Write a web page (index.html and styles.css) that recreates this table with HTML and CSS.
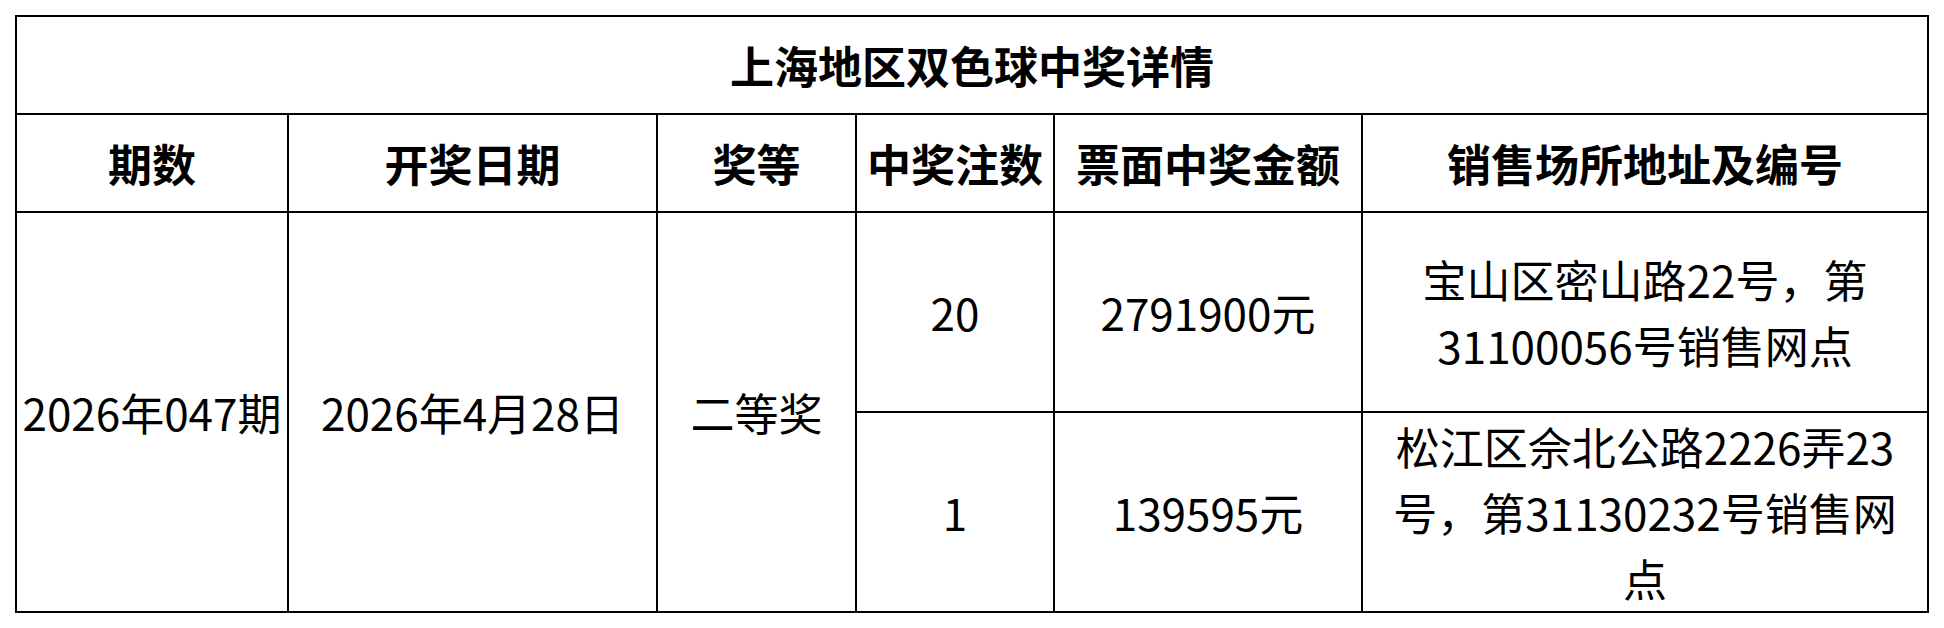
FILE: index.html
```html
<!DOCTYPE html>
<html lang="zh-CN">
<head>
<meta charset="utf-8">
<title>上海地区双色球中奖详情</title>
<link rel="stylesheet" href="styles.css">
</head>
<body>
<div class="page">
  <table class="prize-table">
    <colgroup>
      <col class="c1">
      <col class="c2">
      <col class="c3">
      <col class="c4">
      <col class="c5">
      <col class="c6">
    </colgroup>
    <tr class="row-title">
      <th colspan="6">上海地区双色球中奖详情</th>
    </tr>
    <tr class="row-head">
      <th>期数</th>
      <th>开奖日期</th>
      <th>奖等</th>
      <th>中奖注数</th>
      <th>票面中奖金额</th>
      <th>销售场所地址及编号</th>
    </tr>
    <tr class="row-data1">
      <td rowspan="2">2026年047期</td>
      <td rowspan="2">2026年4月28日</td>
      <td rowspan="2">二等奖</td>
      <td>20</td>
      <td>2791900元</td>
      <td class="addr">宝山区密山路22号，第31100056号销售网点</td>
    </tr>
    <tr class="row-data2">
      <td>1</td>
      <td>139595元</td>
      <td class="addr">松江区佘北公路2226弄23号，第31130232号销售网点</td>
    </tr>
  </table>
</div>
</body>
</html>
```
FILE: styles.css
```css
html, body {
  margin: 0;
  padding: 0;
  background: #fff;
}

.page {
  padding: 15px 0 0 15px;
}

.prize-table {
  border-collapse: collapse;
  table-layout: fixed;
  width: 1914px;
  font-family: "Noto Sans CJK SC", "Noto Sans", sans-serif;
  font-size: 44px;
  line-height: 66px;
  color: #000;
}

.c1 { width: 272px; }
.c2 { width: 369px; }
.c3 { width: 199px; }
.c4 { width: 198px; }
.c5 { width: 308px; }
.c6 { width: 566px; }

.prize-table th,
.prize-table td {
  border: 2px solid #000;
  padding: 0;
  text-align: center;
  vertical-align: middle;
  white-space: normal;
}

.prize-table th {
  font-weight: 700;
  white-space: nowrap;
}

.prize-table td {
  font-weight: 400;
}

.prize-table td.addr {
  padding: 0 24px;
}

.row-title { height: 98px; }
.row-head { height: 98px; }
.row-data1 { height: 200px; }
.row-data2 { height: 199px; }
```
